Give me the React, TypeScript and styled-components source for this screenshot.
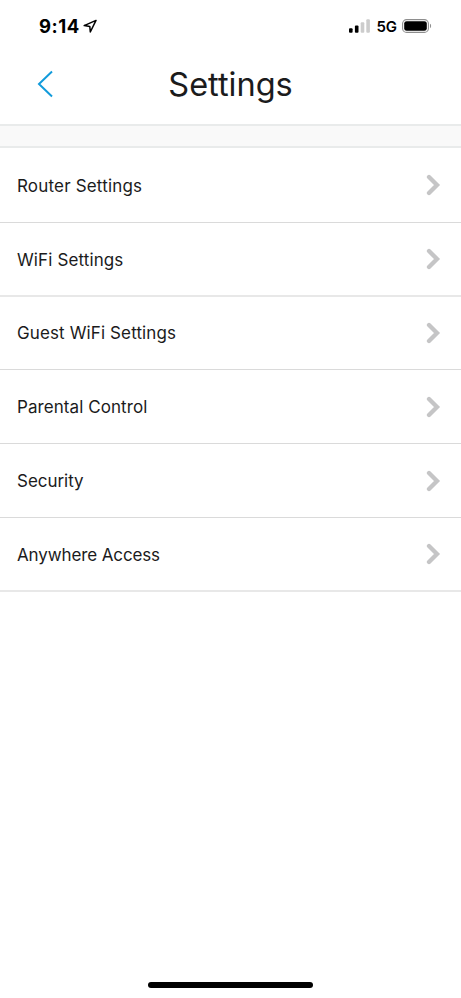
import React from "react";
import styled, { createGlobalStyle } from "styled-components";

const GlobalStyle = createGlobalStyle`
  * { box-sizing: border-box; }
  body { margin: 0; background: #fff; }
`;

const Screen = styled.div`
  width: 100%;
  height: 998px;
  display: flex;
  flex-direction: column;
  overflow: hidden;
  background: #fff;
  color: #1b1b1c;
  font-family: Inter, "Liberation Sans", sans-serif;
`;

const StatusBar = styled.div`
  height: 52px;
  flex: none;
  display: flex;
  align-items: center;
  justify-content: space-between;
  padding: 0 29px 0 39px;
  color: #000;
`;

const Clock = styled.div`
  display: flex;
  align-items: center;
  gap: 3px;
  font-size: 18.5px;
  line-height: 22px;
  font-weight: 700;
  letter-spacing: 0.5px;
`;

const Indicators = styled.div`
  display: flex;
  align-items: center;
  font-size: 15px;
  line-height: 20px;
  font-weight: 600;
`;

const Network = styled.span`
  margin: 1px 5px 0 7px;
  letter-spacing: -0.1px;
`;

const Header = styled.header`
  height: 72px;
  flex: none;
  display: grid;
  grid-template-columns: 60px 1fr 60px;
  align-items: center;
  padding-bottom: 8px;
`;

const BackButton = styled.button`
  border: 0;
  padding: 0 0 0 37px;
  background: none;
  display: flex;
`;

const Title = styled.h1`
  margin: 0;
  padding-top: 2px;
  text-align: center;
  font-size: 32.5px;
  line-height: 40px;
  font-weight: 400;
`;

const Divider = styled.div`
  height: 24px;
  flex: none;
  background: #f9f9f9;
  border: solid #e9ebeb;
  border-width: 2px 0;
`;

const Menu = styled.nav`
  display: flex;
  flex-direction: column;
`;

const MenuRow = styled.a<{ $height: number; $soft: boolean }>`
  height: ${(p) => p.$height}px;
  display: flex;
  align-items: center;
  justify-content: space-between;
  padding: 0 20px 0 17px;
  border-bottom: ${(p) => (p.$soft ? "2px solid #e8e8e8" : "1px solid #dadada")};
`;

const Label = styled.span<{ $tracking: number; $drop: number }>`
  font-size: 17px;
  line-height: 22px;
  padding-top: ${(p) => p.$drop}px;
  letter-spacing: ${(p) => p.$tracking}px;
`;

const HomeIndicator = styled.div`
  width: 165px;
  height: 6px;
  flex: none;
  margin: auto auto 10px 148px;
  border-radius: 3px;
  background: #000;
`;

const items = [
  { label: "Router Settings", height: 75, soft: false, tracking: 0.18, drop: 2 },
  { label: "WiFi Settings", height: 74, soft: true, tracking: 0.12, drop: 2 },
  { label: "Guest WiFi Settings", height: 73, soft: false, tracking: 0.12, drop: 0 },
  { label: "Parental Control", height: 74, soft: false, tracking: 0.07, drop: 0 },
  { label: "Security", height: 74, soft: false, tracking: -0.03, drop: 0 },
  { label: "Anywhere Access", height: 74, soft: true, tracking: -0.12, drop: 2 },
];

const LocationArrow = () => (
  <svg width="14" height="14" viewBox="0 0 14 14" fill="none">
    <path d="M13 1.4 1.2 6.6l5.6.8.5 5.6z" stroke="#000" strokeWidth="1.5" strokeLinejoin="round" />
  </svg>
);

const Signal = () => (
  <svg width="21" height="14" viewBox="0 0 21 14">
    <rect x="0" y="9.2" width="3.6" height="4.6" rx="1" fill="#000" />
    <rect x="5.9" y="6.5" width="3.6" height="7.3" rx="1" fill="#000" />
    <rect x="11.7" y="3.3" width="3.6" height="10.5" rx="1" fill="#ccc" />
    <rect x="17.3" y="0.2" width="3.6" height="13.6" rx="1" fill="#ccc" />
  </svg>
);

const Battery = () => (
  <svg width="30" height="14" viewBox="0 0 30 14">
    <rect x=".6" y=".6" width="25.8" height="12.8" rx="4" fill="none" stroke="#8e8e8e" strokeWidth="1.1" />
    <rect x="2.2" y="2.2" width="22.6" height="9.6" rx="2.4" fill="#000" />
    <path d="M28 4.8c1.5.6 1.5 3.8 0 4.4z" fill="#8e8e8e" />
  </svg>
);

const Chevron = () => (
  <svg width="16" height="22" viewBox="0 0 16 22" fill="none">
    <path d="m4 3 8 8-8 8" stroke="#c5c5c6" strokeWidth="4.3" strokeLinecap="round" />
  </svg>
);

export default function App() {
  return (
    <Screen>
      <GlobalStyle />
      <StatusBar>
        <Clock>
          9:14
          <LocationArrow />
        </Clock>
        <Indicators>
          <Signal />
          <Network>5G</Network>
          <Battery />
        </Indicators>
      </StatusBar>
      <Header>
        <BackButton aria-label="Back">
          <svg width="17" height="28" viewBox="0 0 17 28" fill="none">
            <path d="M15 1.5 2 14l13 12.5" stroke="#129bdb" strokeWidth="2" />
          </svg>
        </BackButton>
        <Title>Settings</Title>
      </Header>
      <Divider />
      <Menu>
        {items.map((item) => (
          <MenuRow key={item.label} $height={item.height} $soft={item.soft}>
            <Label $tracking={item.tracking} $drop={item.drop}>{item.label}</Label>
            <Chevron />
          </MenuRow>
        ))}
      </Menu>
      <HomeIndicator />
    </Screen>
  );
}
